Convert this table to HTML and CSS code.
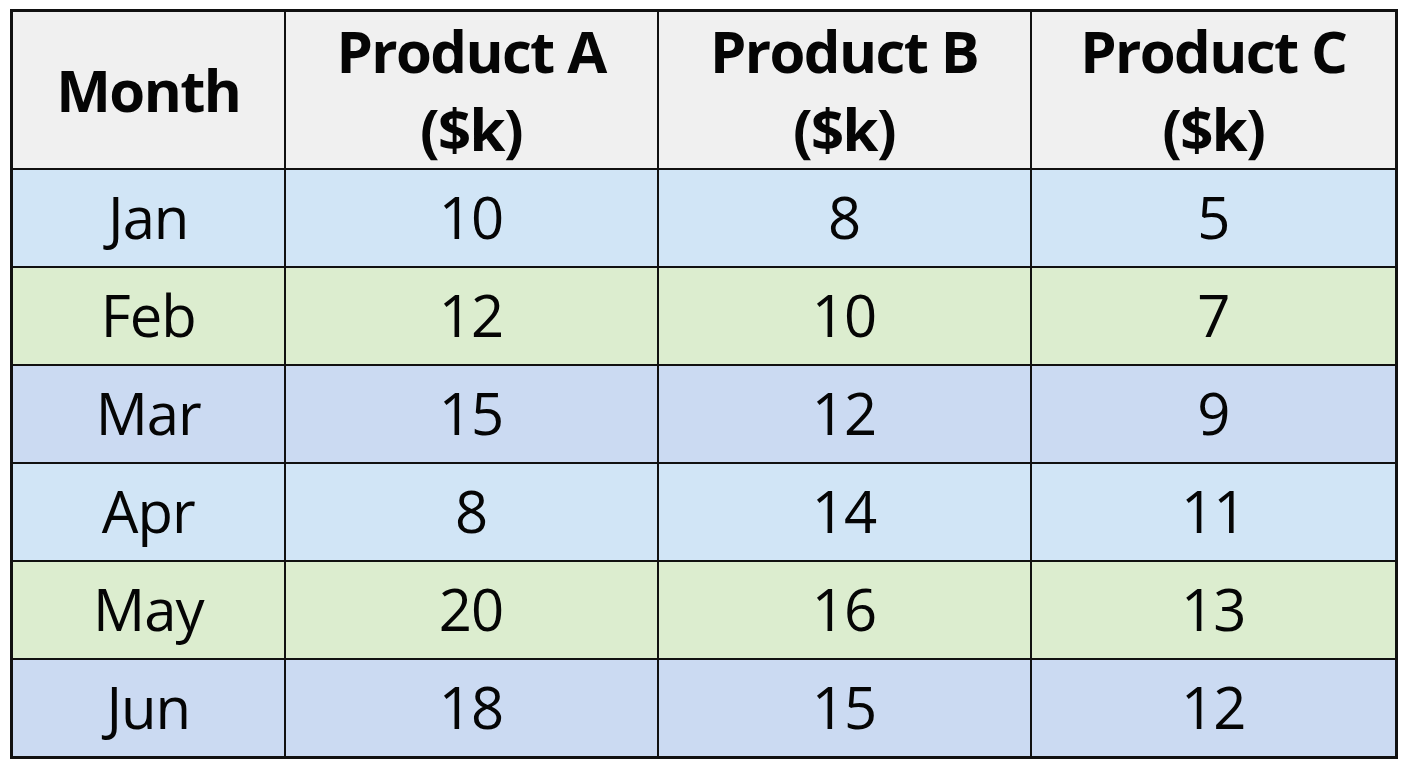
FILE: index.html
```html
<!DOCTYPE html>
<html>
<head>
<meta charset="utf-8">
<link rel="stylesheet" href="styles.css">
</head>
<body>
<table class="sales">
  <colgroup>
    <col class="c1"><col class="c2"><col class="c3"><col class="c4">
  </colgroup>
  <thead>
    <tr class="head">
      <th>Month</th>
      <th>Product A<br>($k)</th>
      <th>Product B<br>($k)</th>
      <th>Product C<br>($k)</th>
    </tr>
  </thead>
  <tbody>
    <tr class="blue"><td>Jan</td><td>10</td><td>8</td><td>5</td></tr>
    <tr class="green"><td>Feb</td><td>12</td><td>10</td><td>7</td></tr>
    <tr class="lav"><td>Mar</td><td>15</td><td>12</td><td>9</td></tr>
    <tr class="blue"><td>Apr</td><td>8</td><td>14</td><td>11</td></tr>
    <tr class="green"><td>May</td><td>20</td><td>16</td><td>13</td></tr>
    <tr class="lav"><td>Jun</td><td>18</td><td>15</td><td>12</td></tr>
  </tbody>
</table>
</body>
</html>
```
FILE: styles.css
```css
html, body {
  margin: 0;
  padding: 0;
  background: #ffffff;
}
body {
  padding: 9px 0 0 10px;
  font-family: "Open Sans", "Noto Sans", sans-serif;
  color: #050505;
}
.sales {
  border-collapse: collapse;
  table-layout: fixed;
  width: 1385px;
  border: 3px solid #111;
}
.c1 { width: 273px; }
.c2 { width: 373px; }
.c3 { width: 373px; }
.c4 { width: 366px; }
.sales th, .sales td {
  border: 2px solid #111;
  text-align: center;
  vertical-align: middle;
  padding: 0;
}
.head th {
  height: 154px;
  background: #f0f0f0;
  font-weight: 700;
  font-size: 58px;
  line-height: 78px;
  letter-spacing: -1.6px;
}
.sales td {
  height: 93px;
  font-size: 58px;
  line-height: 64px;
  letter-spacing: -1px;
  padding-bottom: 3px;
}
.blue td { background: #d1e5f6; }
.green td { background: #dcedcf; }
.lav td { background: #cbdaf2; }
```
